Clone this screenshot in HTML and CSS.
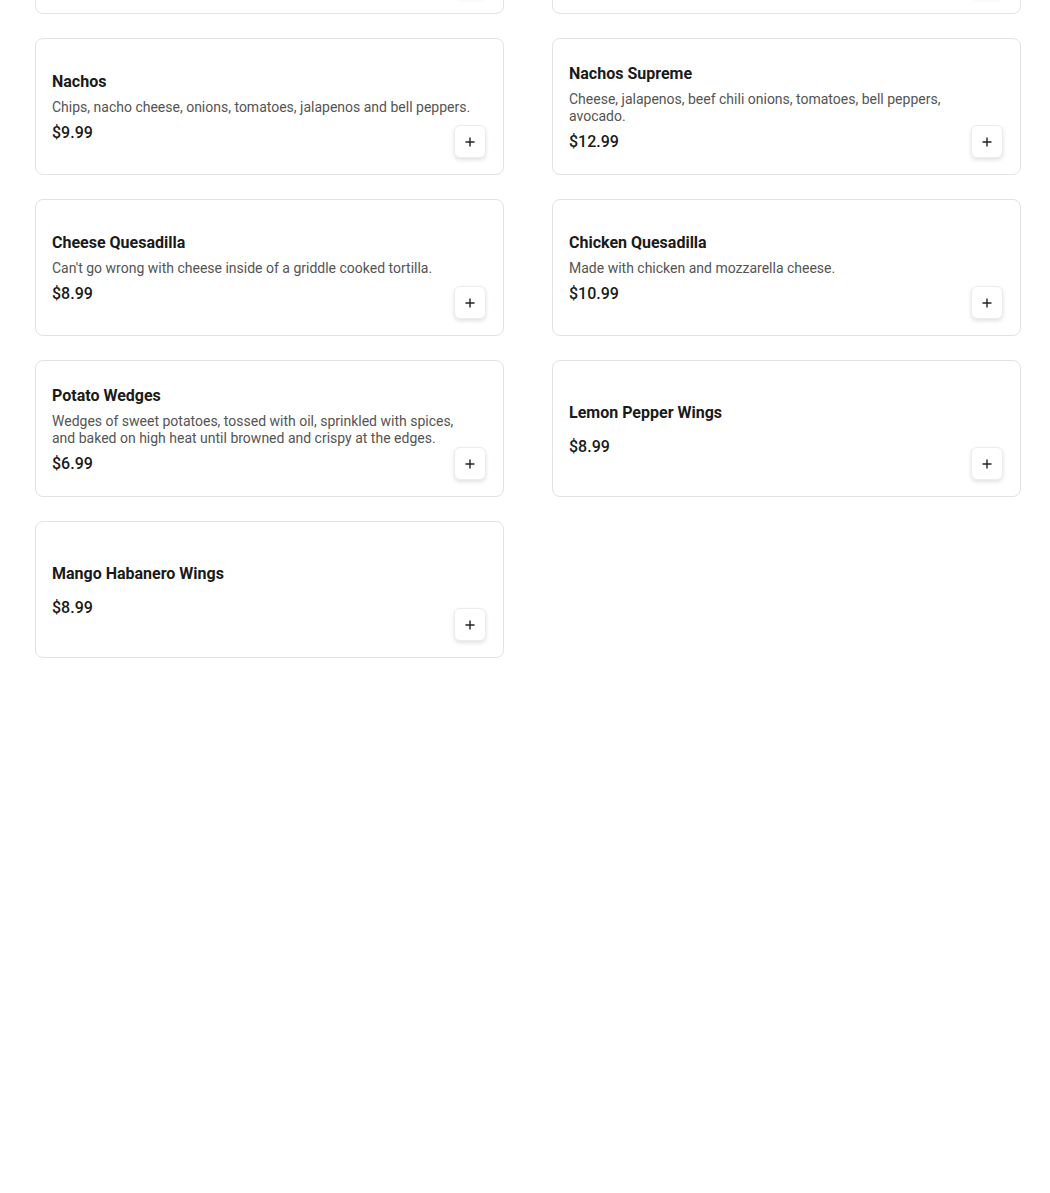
FILE: index.html
```html
<!DOCTYPE html>
<html lang="en">
<head>
<meta charset="utf-8">
<title>Menu</title>
<link rel="stylesheet" href="styles.css">
</head>
<body>
<main class="menu">
  <div class="grid">
    <article class="card">
      <div class="info">
        <h3 class="name">Buffalo Wings</h3>
        <p class="desc">Crispy wings tossed in our classic buffalo sauce.</p>
        <div class="price">$8.99</div>
      </div>
      <button class="add" aria-label="Add"><svg viewBox="0 0 12 12" width="12" height="12"><path d="M6 1.5v9M1.5 6h9" stroke="currentColor" stroke-width="1.4" fill="none"/></svg></button>
    </article>
    <article class="card">
      <div class="info">
        <h3 class="name">BBQ Wings</h3>
        <p class="desc">Wings glazed with smoky barbecue sauce.</p>
        <div class="price">$8.99</div>
      </div>
      <button class="add" aria-label="Add"><svg viewBox="0 0 12 12" width="12" height="12"><path d="M6 1.5v9M1.5 6h9" stroke="currentColor" stroke-width="1.4" fill="none"/></svg></button>
    </article>

    <article class="card">
      <div class="info">
        <h3 class="name">Nachos</h3>
        <p class="desc">Chips, nacho cheese, onions, tomatoes, jalapenos and bell peppers.</p>
        <div class="price">$9.99</div>
      </div>
      <button class="add" aria-label="Add"><svg viewBox="0 0 12 12" width="12" height="12"><path d="M6 1.5v9M1.5 6h9" stroke="currentColor" stroke-width="1.4" fill="none"/></svg></button>
    </article>
    <article class="card">
      <div class="info">
        <h3 class="name">Nachos Supreme</h3>
        <p class="desc">Cheese, jalapenos, beef chili onions, tomatoes, bell peppers, avocado.</p>
        <div class="price">$12.99</div>
      </div>
      <button class="add" aria-label="Add"><svg viewBox="0 0 12 12" width="12" height="12"><path d="M6 1.5v9M1.5 6h9" stroke="currentColor" stroke-width="1.4" fill="none"/></svg></button>
    </article>

    <article class="card">
      <div class="info">
        <h3 class="name">Cheese Quesadilla</h3>
        <p class="desc">Can't go wrong with cheese inside of a griddle cooked tortilla.</p>
        <div class="price">$8.99</div>
      </div>
      <button class="add" aria-label="Add"><svg viewBox="0 0 12 12" width="12" height="12"><path d="M6 1.5v9M1.5 6h9" stroke="currentColor" stroke-width="1.4" fill="none"/></svg></button>
    </article>
    <article class="card">
      <div class="info">
        <h3 class="name">Chicken Quesadilla</h3>
        <p class="desc">Made with chicken and mozzarella cheese.</p>
        <div class="price">$10.99</div>
      </div>
      <button class="add" aria-label="Add"><svg viewBox="0 0 12 12" width="12" height="12"><path d="M6 1.5v9M1.5 6h9" stroke="currentColor" stroke-width="1.4" fill="none"/></svg></button>
    </article>

    <article class="card">
      <div class="info">
        <h3 class="name">Potato Wedges</h3>
        <p class="desc">Wedges of sweet potatoes, tossed with oil, sprinkled with spices, and baked on high heat until browned and crispy at the edges.</p>
        <div class="price">$6.99</div>
      </div>
      <button class="add" aria-label="Add"><svg viewBox="0 0 12 12" width="12" height="12"><path d="M6 1.5v9M1.5 6h9" stroke="currentColor" stroke-width="1.4" fill="none"/></svg></button>
    </article>
    <article class="card">
      <div class="info">
        <h3 class="name">Lemon Pepper Wings</h3>
        <p class="desc"></p>
        <div class="price">$8.99</div>
      </div>
      <button class="add" aria-label="Add"><svg viewBox="0 0 12 12" width="12" height="12"><path d="M6 1.5v9M1.5 6h9" stroke="currentColor" stroke-width="1.4" fill="none"/></svg></button>
    </article>

    <article class="card">
      <div class="info">
        <h3 class="name">Mango Habanero Wings</h3>
        <p class="desc"></p>
        <div class="price">$8.99</div>
      </div>
      <button class="add" aria-label="Add"><svg viewBox="0 0 12 12" width="12" height="12"><path d="M6 1.5v9M1.5 6h9" stroke="currentColor" stroke-width="1.4" fill="none"/></svg></button>
    </article>
  </div>
</main>
</body>
</html>
```
FILE: styles.css
```css
* { box-sizing: border-box; }
html, body {
  margin: 0;
  padding: 0;
  background: #fff;
  font-family: Roboto, "Liberation Sans", Arial, sans-serif;
  color: #1a1a1a;
}
.menu {
  padding: 0 29px 0 35px;
}
.grid {
  display: grid;
  grid-template-columns: 469px 469px;
  column-gap: 48px;
  row-gap: 24px;
  margin-top: -123px;
}
.card {
  position: relative;
  height: 137px;
  border: 1px solid #e3e3e3;
  border-radius: 8px;
  background: #fff;
  padding: 16px;
  display: flex;
  align-items: center;
}
.info {
  width: 420px;
  padding-top: 1px;
  display: flex;
  flex-direction: column;
}
.name {
  margin: 0;
  font-size: 16px;
  line-height: 19px;
  font-weight: 700;
  color: #1a1a1a;
}
.desc {
  margin: 8px 0 7px;
  font-size: 14px;
  line-height: 17px;
  color: #545454;
}
.price {
  font-size: 16px;
  line-height: 19px;
  font-weight: 500;
  color: #1a1a1a;
}
.add {
  position: absolute;
  right: 17px;
  bottom: 16px;
  width: 32px;
  height: 33px;
  padding: 0;
  border: 1px solid #ececec;
  border-radius: 6px;
  background: #fff;
  color: #222;
  box-shadow: 0 2px 4px rgba(0, 0, 0, 0.12);
  display: flex;
  align-items: center;
  justify-content: center;
  cursor: pointer;
}
.add svg { display: block; }
```
